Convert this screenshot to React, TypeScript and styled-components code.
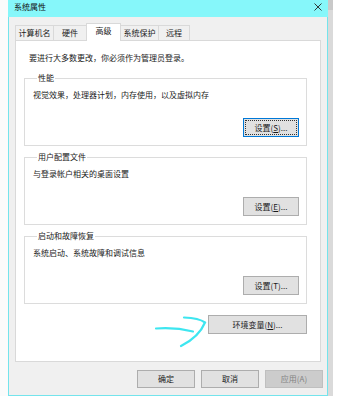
import React from "react";
import styled, { createGlobalStyle, css } from "styled-components";

const Global = createGlobalStyle`
  html, body { margin: 0; padding: 0; background: #ffffff; }
  body { font-family: "Noto Sans CJK SC", "Noto Sans", sans-serif; font-size: 8px; color: #1a1a1a; }
  * { box-sizing: border-box; }
`;

const Page = styled.div`
  display: flex;
  width: 348px;
  height: 396px;
  background: #ffffff;
  overflow: hidden;
`;

const Gutter = styled.div`
  width: 8px;
  flex: none;
  background: #fbfbfb;
`;

const RightStrip = styled.div`
  width: 5px;
  flex: none;
  background: linear-gradient(to bottom, #c9c9c9 0, #c9c9c9 10px, #dadada 10px);
`;

const Window = styled.div`
  position: relative;
  width: 320px;
  height: 396px;
  flex: none;
  display: flex;
  flex-direction: column;
  background: #f0f0f0;
  border: 1px solid #74e4ec;
  border-top: none;
`;

const TitleBar = styled.div`
  height: 17px;
  display: flex;
  align-items: flex-start;
  justify-content: space-between;
  background: #86f7fa;
  padding: 2px 5px 0 6px;
  margin: 0 -1px;
`;

const Title = styled.span`
  line-height: 10px;
  color: #111;
`;

const CloseIcon = styled.svg`
  width: 8px;
  height: 8px;
  margin-top: 1px;
  margin-right: 1px;
`;

const Body = styled.div`
  flex: 1;
  display: flex;
  flex-direction: column;
  padding: 6px 4px 0 6px;
`;

const TabStrip = styled.div`
  display: flex;
  align-items: flex-end;
  height: 17px;
`;

const Tab = styled.div<{ $w: number; $active?: boolean }>`
  width: ${(p) => p.$w}px;
  height: 15px;
  margin-right: -1px;
  border: 1px solid #d9d9d9;
  border-bottom: none;
  background: #f0f0f0;
  text-align: center;
  line-height: 11px;
  padding-top: 1px;
  color: #1a1a1a;
  ${(p) =>
    p.$active &&
    css`
      position: relative;
      z-index: 1;
      height: 18px;
      margin-bottom: -1px;
      background: #ffffff;
    `}
`;

const Panel = styled.div`
  width: 306px;
  height: 322px;
  background: #ffffff;
  border: 1px solid #d9d9d9;
  padding: 11px 0 0 8px;
  display: flex;
  flex-direction: column;
`;

const Intro = styled.div`
  margin-left: 5px;
  line-height: 11px;
`;

const Group = styled.fieldset<{ $top: number }>`
  width: 283px;
  margin: ${(p) => p.$top}px 0 0 0;
  padding: 6px 7px 8px 8px;
  border: 1px solid #dcdcdc;
  display: flex;
  flex-direction: column;
  min-width: 0;
`;

const Legend = styled.legend`
  padding: 0 1px;
  margin-left: 4px;
  line-height: 10px;
  color: #1a1a1a;
`;

const Desc = styled.div`
  line-height: 11px;
`;

const ButtonRow = styled.div<{ $top: number }>`
  display: flex;
  justify-content: flex-end;
  margin-top: ${(p) => p.$top}px;
`;

const EnvRow = styled.div`
  width: 283px;
  display: flex;
  justify-content: flex-end;
  margin-top: 11px;
`;

const Button = styled.button<{ $w: number; $focused?: boolean }>`
  width: ${(p) => p.$w}px;
  height: 19px;
  padding: 0;
  font-family: inherit;
  font-size: 8px;
  line-height: 10px;
  color: #1a1a1a;
  background: #e1e1e1;
  border: 1px solid #adadad;
  ${(p) =>
    p.$focused &&
    css`
      border-color: #0078d7;
      outline: 1px dotted #333;
      outline-offset: -3px;
    `}
  &:disabled {
    background: #cccccc;
    border-color: #bfbfbf;
    color: #838383;
  }
`;

const Footer = styled.div`
  display: flex;
  justify-content: flex-end;
  gap: 6px;
  margin-top: 8px;
`;

const FooterButton = styled(Button)`
  height: 18px;
`;

const Key = styled.span`
  text-decoration: underline;
`;

const Arrow = styled.svg`
  position: absolute;
  left: 140px;
  top: 312px;
  width: 64px;
  height: 40px;
  pointer-events: none;
`;

export default function App() {
  return (
    <>
      <Global />
      <Page>
        <Gutter />
        <Window>
          <TitleBar>
            <Title>系统属性</Title>
            <CloseIcon viewBox="0 0 8 8">
              <path d="M0.5 0.5 L7.5 7.5 M7.5 0.5 L0.5 7.5" stroke="#222" strokeWidth="0.9" />
            </CloseIcon>
          </TitleBar>
          <Body>
            <TabStrip>
              <Tab $w={39}>计算机名</Tab>
              <Tab $w={34}>硬件</Tab>
              <Tab $w={35} $active>高级</Tab>
              <Tab $w={39}>系统保护</Tab>
              <Tab $w={32}>远程</Tab>
            </TabStrip>
            <Panel>
              <Intro>要进行大多数更改，你必须作为管理员登录。</Intro>
              <Group $top={10}>
                <Legend>性能</Legend>
                <Desc>视觉效果，处理器计划，内存使用，以及虚拟内存</Desc>
                <ButtonRow $top={18}>
                  <Button $w={56} $focused>
                    设置(<Key>S</Key>)...
                  </Button>
                </ButtonRow>
              </Group>
              <Group $top={6}>
                <Legend>用户配置文件</Legend>
                <Desc>与登录帐户相关的桌面设置</Desc>
                <ButtonRow $top={18}>
                  <Button $w={56}>
                    设置(<Key>E</Key>)...
                  </Button>
                </ButtonRow>
              </Group>
              <Group $top={6}>
                <Legend>启动和故障恢复</Legend>
                <Desc>系统启动、系统故障和调试信息</Desc>
                <ButtonRow $top={18}>
                  <Button $w={56}>设置(T)...</Button>
                </ButtonRow>
              </Group>
              <EnvRow>
                <Button $w={99}>
                  环境变量(<Key>N</Key>)...
                </Button>
              </EnvRow>
            </Panel>
            <Footer>
              <FooterButton $w={58}>确定</FooterButton>
              <FooterButton $w={58}>取消</FooterButton>
              <FooterButton $w={58} disabled>
                应用(A)
              </FooterButton>
            </Footer>
          </Body>
          <Arrow viewBox="0 0 64 40">
            <path
              d="M7 16.5 Q26 15 44 19.5"
              fill="none"
              stroke="#3ee6f0"
              strokeWidth="2.2"
              strokeLinecap="round"
            />
            <path
              d="M35 5.5 Q50 6 56 10.5 Q50 25 32 34"
              fill="none"
              stroke="#3ee6f0"
              strokeWidth="2.2"
              strokeLinecap="round"
            />
          </Arrow>
        </Window>
        <RightStrip />
      </Page>
    </>
  );
}
